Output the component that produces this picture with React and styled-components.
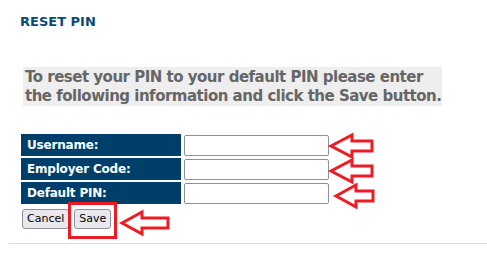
import styled, { createGlobalStyle } from "styled-components";

const GlobalStyle = createGlobalStyle`
  * {
    box-sizing: border-box;
  }

  body {
    margin: 0;
    background: #fff;
    font-family: Tahoma, "DejaVu Sans", Verdana, sans-serif;
  }
`;

const Page = styled.div`
  position: relative;
  width: 487px;
  height: 265px;
  padding: 14px 0 0 9px;
  overflow: hidden;
`;

const Content = styled.div`
  padding-left: 11px;
`;

const Title = styled.h1`
  margin: 0;
  font-size: 13px;
  font-weight: bold;
  color: #0b4a72;
  line-height: 16px;
`;

const Intro = styled.p`
  display: inline-block;
  margin: 37px 0 0 3px;
  padding: 1px 1px 0 2px;
  background: #eeeeee;
  color: #666666;
  font-size: 15px;
  font-weight: bold;
  line-height: 19px;
  letter-spacing: -0.5px;
`;

const Form = styled.div`
  display: grid;
  grid-template-columns: 160px 146px;
  grid-auto-rows: 22px;
  gap: 2px 3px;
  margin: 28px 0 0 1px;
`;

const Label = styled.label`
  display: flex;
  align-items: center;
  padding-left: 6px;
  background: #003f69;
  color: #fff;
  font-size: 12px;
  font-weight: bold;
  letter-spacing: -0.2px;
`;

const Field = styled.input`
  width: 145px;
  height: 21px;
  margin-top: 1px;
  border: 1px solid #8f8f9d;
  border-radius: 2px;
  background: #fff;
`;

const Buttons = styled.div`
  display: flex;
  gap: 5px;
  margin: 5px 0 0 2px;
`;

const Button = styled.button`
  height: 20px;
  padding: 0 4px;
  border: 1px solid #8f8f9d;
  border-radius: 3px;
  background: #e9e9ed;
  color: #000;
  font-family: inherit;
  font-size: 11px;
  line-height: 18px;
`;

const Rule = styled.hr`
  margin: 14px 0 0;
  border: none;
  border-top: 1px solid #dddddd;
`;

const Overlay = styled.svg`
  position: absolute;
  top: 0;
  left: 0;
  pointer-events: none;
`;

const arrow = (tip, y, head, tail) =>
  `${tip},${y} ${head},${y - 11} ${head},${y - 5} ${tail},${y - 5} ${tail},${y + 5} ${head},${y + 5} ${head},${y + 11}`;

const Annotations = () => (
  <Overlay width="487" height="265" viewBox="0 0 487 265">
    <g fill="none" stroke="#ed1c24" strokeWidth="3" strokeLinejoin="miter">
      <polygon points={arrow(331, 146, 352, 372)} />
      <polygon points={arrow(331, 171, 352, 372)} />
      <polygon points={arrow(336, 196, 356, 373)} />
      <polygon points={arrow(122, 223, 142, 168)} />
      <rect x="69.5" y="203.5" width="46" height="34" />
    </g>
  </Overlay>
);

const App = () => (
  <Page>
    <GlobalStyle />
    <Content>
      <Title>RESET PIN</Title>
      <Intro>
        To reset your PIN to your default PIN please enter
        <br />
        the following information and click the Save button.
      </Intro>
      <Form>
        <Label>Username:</Label>
        <Field type="text" />
        <Label>Employer Code:</Label>
        <Field type="text" />
        <Label>Default PIN:</Label>
        <Field type="password" />
      </Form>
      <Buttons>
        <Button>Cancel</Button>
        <Button>Save</Button>
      </Buttons>
    </Content>
    <Rule />
    <Annotations />
  </Page>
);

export default App;
